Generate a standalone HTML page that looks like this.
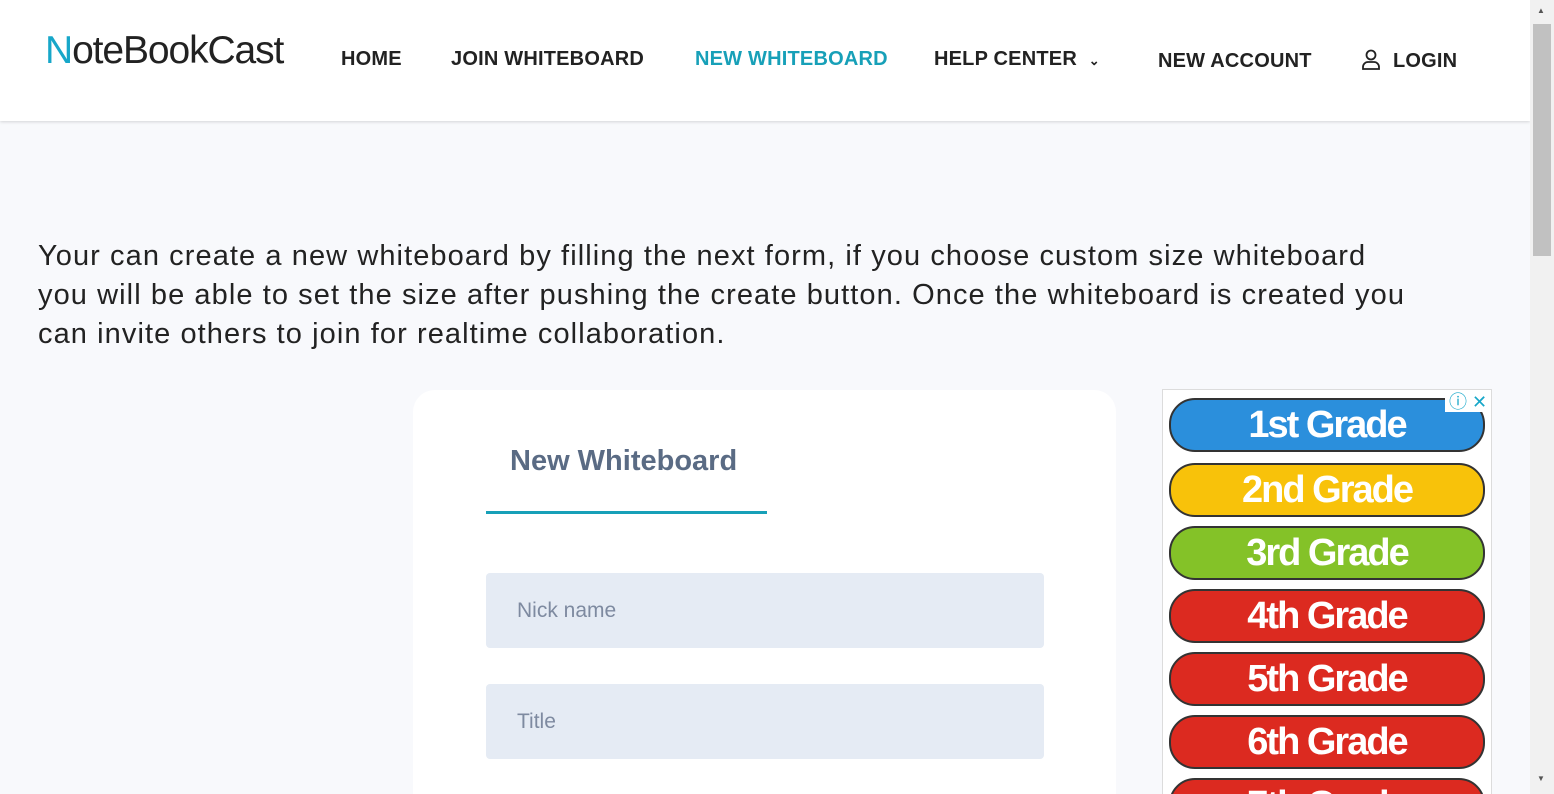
<!DOCTYPE html>
<html style="overflow:hidden;height:794px"><head><style>
body{margin:0;width:1554px;height:794px;overflow:hidden;background:#f8f9fc;font-family:"Liberation Sans",sans-serif;position:relative}
.hdr{position:absolute;left:0;top:0;width:1530px;height:121px;background:#fff;box-shadow:0 1px 3px rgba(0,0,0,.15)}
.logo{position:absolute;left:45px;top:29px;font-size:39px;letter-spacing:-1.1px;color:#222}
.logo span{color:#17a7c9}
.nav{position:absolute;top:48px;font-size:20px;font-weight:bold;color:#222;letter-spacing:.2px}
.sb{position:absolute;right:0;top:0;width:24px;height:794px;background:#f1f1f1}
.thumb{position:absolute;right:3px;top:24px;width:18px;height:232px;background:#c1c1c1}
.intro{position:absolute;left:38px;top:237px;font-size:29px;line-height:39px;color:#222;white-space:nowrap;letter-spacing:1.08px}
.card{position:absolute;left:413px;top:390px;width:703px;height:404px;background:#fff;border-radius:22px 22px 0 0}
.inp{position:absolute;left:73px;width:558px;height:75px;background:#e5ebf4;border-radius:4px;font-size:21px;color:#7e8aa0;line-height:75px;text-indent:31px}
.ad{position:absolute;left:1162px;top:389px;width:328px;height:405px;background:#fff;border:1px solid #dcdcdc;border-bottom:none;overflow:hidden}
.btn{position:absolute;left:6px;width:312px;height:50px;border:2px solid #333;border-radius:26px;color:#fff;font-weight:bold;font-size:38px;text-align:center;line-height:50px;letter-spacing:-2px}
</style></head><body>
<div class="hdr">
<div class="logo"><span>N</span>oteBookCast</div>
<div class="nav" style="left:341px">HOME</div>
<div class="nav" style="left:451px">JOIN WHITEBOARD</div>
<div class="nav" style="left:695px;color:#17a0b8">NEW WHITEBOARD</div>
<div class="nav" style="left:934px">HELP CENTER <span style="font-size:13px;margin-left:6px">&#8964;</span></div>
<div class="nav" style="left:1158px;top:50px">NEW ACCOUNT</div>
<svg style="position:absolute;left:1361px;top:49px" width="20" height="22" viewBox="0 0 20 22" fill="none" stroke="#222" stroke-width="1.8"><circle cx="10" cy="6" r="4.5"/><path d="M2 20v-2a5 5 0 0 1 5-5h6a5 5 0 0 1 5 5v2z"/></svg>
<div class="nav" style="left:1393px;top:50px">LOGIN</div>
</div>
<div class="sb"><div class="thumb"></div><div style="position:absolute;left:7px;top:6px;font-size:8px;color:#555">▲</div><div style="position:absolute;left:7px;top:774px;font-size:8px;color:#555">▼</div></div>
<div class="intro">Your can create a new whiteboard by filling the next form, if you choose custom size whiteboard<br>you will be able to set the size after pushing the create button. Once the whiteboard is created you<br>can invite others to join for realtime collaboration.</div>
<div class="card">
<div style="position:absolute;left:97px;top:55px;font-size:29px;font-weight:bold;color:#5a6b84">New Whiteboard</div>
<div style="position:absolute;left:73px;top:121px;width:281px;height:3px;background:#17a0b8"></div>
<div class="inp" style="top:183px">Nick name</div>
<div class="inp" style="top:294px">Title</div>
</div>
<div class="ad">
<div class="btn" style="top:8px;background:#2b8fdc">1st Grade</div>
<div class="btn" style="top:73px;background:#f8c20a">2nd Grade</div>
<div class="btn" style="top:136px;background:#84c228">3rd Grade</div>
<div class="btn" style="top:199px;background:#dc2a20">4th Grade</div>
<div class="btn" style="top:262px;background:#dc2a20">5th Grade</div>
<div class="btn" style="top:325px;background:#dc2a20">6th Grade</div>
<div class="btn" style="top:388px;background:#dc2a20">7th Grade</div>
<div style="position:absolute;right:0;top:2px;width:46px;height:20px;background:#fff;color:#17a7c9;font-size:18px;line-height:20px;text-align:center">ⓘ ✕</div>
</div>
</body></html>
